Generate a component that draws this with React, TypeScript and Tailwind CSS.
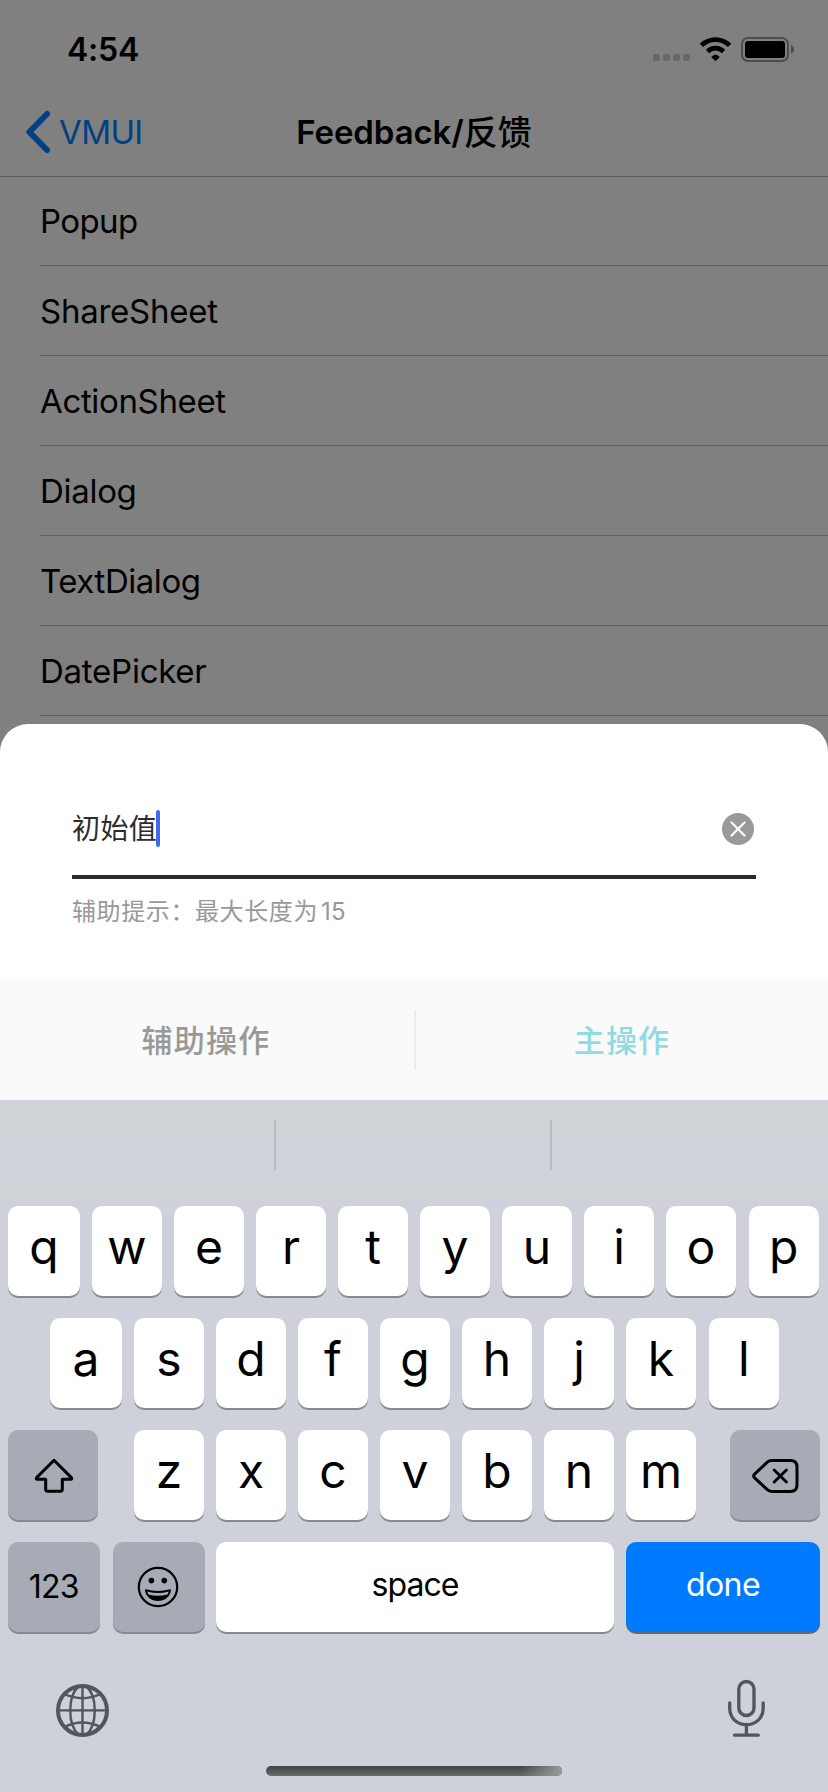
import type { ReactNode } from 'react';

const rows = [
  { label: 'Popup', cls: 'h-[89px] tracking-[-0.6px]' },
  { label: 'ShareSheet', cls: 'h-[90px] tracking-[-0.25px]' },
  { label: 'ActionSheet', cls: 'h-[90px] tracking-[-0.35px]' },
  { label: 'Dialog', cls: 'h-[90px] tracking-[-0.3px]' },
  { label: 'TextDialog', cls: 'h-[90px] tracking-[-0.45px]' },
  { label: 'DatePicker', cls: 'h-[90px] tracking-[-0.25px]' },
];

function StatusIcons() {
  return (
    <svg width="146" height="30" viewBox="651 35 146 30">
      <g fill="#676767">
        <rect x="653" y="54" width="7" height="7" rx="2" />
        <rect x="663" y="54" width="7" height="7" rx="2" />
        <rect x="673" y="54" width="7" height="7" rx="2" />
        <rect x="683" y="54" width="7" height="7" rx="2" />
      </g>
      <g fill="none" stroke="#000" strokeWidth="4.8">
        <path d="M701.4 45.4A20 20 0 0 1 729.6 45.4" />
        <path d="M707.5 51.5A11.3 11.3 0 0 1 723.5 51.5" />
      </g>
      <path d="M711.2 57Q715.5 52 719.8 57L715.5 61.2Z" />
      <rect x="742" y="38" width="46" height="23" rx="6" fill="none" stroke="#4d4d4d" strokeWidth="2" />
      <rect x="745" y="41" width="40" height="17" rx="3" />
      <path d="M791 45.3Q794 46.5 794 49.5T791 53.7Z" fill="#4d4d4d" />
    </svg>
  );
}

function Key({ children, cls = 'w-[70px]' }: { children: ReactNode; cls?: string }) {
  return (
    <div className={`flex h-[90px] shrink-0 items-center justify-center rounded-[10px] bg-white pb-[8px] text-[48px] leading-none font-[375] shadow-[0_2px_0_#898a8d] ${cls}`}>
      {children}
    </div>
  );
}

function GreyKey({ children, cls = 'w-[90px]' }: { children: ReactNode; cls?: string }) {
  return (
    <div className={`flex h-[90px] shrink-0 items-center justify-center rounded-[10px] bg-[#a7abb6] text-[32px] leading-none shadow-[0_2px_0_#898a8d] ${cls}`}>
      {children}
    </div>
  );
}

export default function App() {
  return (
    <div className="flex h-[1792px] w-[828px] flex-col overflow-hidden bg-[#808080] font-['Inter','Noto_Sans_CJK_SC',sans-serif] text-black">
      <header className="flex h-[177px] shrink-0 flex-col border-b border-[#595959]">
        <div className="flex h-[88px] items-start justify-between pt-[35px] pr-[31px] pl-[67px]">
          <span className="text-[32px] leading-[30px] font-semibold tracking-[-0.2px]">4:54</span>
          <StatusIcons />
        </div>
        <div className="grid h-[88px] grid-cols-[1fr_auto_1fr] items-center pl-[24px]">
          <div className="flex items-center text-[#004085]">
            <svg width="28" height="44" viewBox="24 110 28 44" fill="none" stroke="currentColor" strokeWidth="6" strokeLinecap="round" strokeLinejoin="round">
              <path d="M47 114L29.3 132L47 150" />
            </svg>
            <span className="pl-[7px] text-[33px] leading-none tracking-[-0.6px]">VMUI</span>
          </div>
          <div className="flex items-center pr-[24px] leading-none font-semibold">
            <span className="text-[33px] tracking-[-0.1px]">Feedback/</span>
            <span className="pt-[2px] text-[34px] font-medium">反馈</span>
          </div>
        </div>
      </header>

      <ul className="flex h-[546.5px] shrink-0 flex-col pl-[40px] text-[33px] leading-none">
        {rows.map((r) => (
          <li key={r.label} className={`flex shrink-0 items-center border-b border-[#636363] pt-px ${r.cls}`}>
            {r.label}
          </li>
        ))}
      </ul>

      <section className="flex h-[376.5px] shrink-0 flex-col overflow-hidden rounded-t-[28px] bg-white">
        <div className="flex h-[256.5px] shrink-0 flex-col px-[72px] pt-[60px]">
          <div className="flex h-[95.5px] items-center justify-between border-b-4 border-[#2c2c2e] pr-[2px]">
            <div className="flex items-center pb-[2px]">
              <span className="w-[84px] pt-[2px] text-[28px] leading-none tracking-[0.4px] whitespace-nowrap text-[#2c2c2e]">初始值</span>
              <span className="h-[37px] w-[4px] rounded-[2px] bg-[#4169f0]" />
            </div>
            <svg width="32" height="34" viewBox="0 0 32 34">
              <circle cx="16" cy="17" r="16" fill="#999" />
              <path d="M9.5 10.5L22.5 23.5M22.5 10.5L9.5 23.5" stroke="#fff" strokeWidth="2.2" strokeLinecap="round" />
            </svg>
          </div>
          <p className="flex pt-[20px] text-[24px] leading-[26px] tracking-[0.6px] text-[#999]">
            <span>辅助提示：最大长度为</span>
            <span className="pl-[3px] tracking-[0.3px]">15</span>
          </p>
        </div>
        <div className="flex h-[120px] items-center bg-[#fafafa] text-[31px] leading-none font-medium">
          <button className="flex-1 pr-[2px] tracking-[1.2px] text-[#999]">辅助操作</button>
          <span className="h-[60px] w-[2px] bg-[#ececec]" />
          <button className="flex-1 tracking-[1.2px] text-[#90dbe1]">主操作</button>
        </div>
      </section>

      <section className="flex h-[692px] shrink-0 flex-col bg-[#ced1d9]">
        <div className="h-[106px] shrink-0">
          <div className="flex h-[100px] bg-[linear-gradient(to_bottom,#ced2db_2%,#d0d3d7_8%,#d0d3d7_35%,#ced2da_37%,#ced2da_84%,#d0d3d7_88%,#d0d3d7_99%,#ced1d9_100%)] pt-[20px]">
            <div className="h-[50px] w-[276px] border-r-2 border-[#b9bbc0]" />
            <div className="h-[50px] w-[276px] border-r-2 border-[#b9bbc0]" />
          </div>
        </div>
        <div className="flex flex-col gap-[22px]">
          <div className="flex gap-[12px] pl-[8px]">
            <Key cls="w-[72px]">q</Key>
            {['w', 'e', 'r', 't', 'y', 'u', 'i', 'o'].map((k) => (
              <Key key={k}>{k}</Key>
            ))}
            <Key cls="ml-[0.5px] w-[70.5px]">p</Key>
          </div>
          <div className="flex gap-[12px] pl-[50px]">
            <Key cls="w-[72px]">a</Key>
            {['s', 'd', 'f', 'g', 'h', 'j', 'k'].map((k) => (
              <Key key={k}>{k}</Key>
            ))}
            <Key cls="ml-[0.5px] w-[70.5px]">l</Key>
          </div>
          <div className="flex px-[8px]">
            <GreyKey>
              <svg width="42" height="42" viewBox="32 1454 42 42" fill="none" stroke="#000" strokeWidth="3" strokeLinejoin="round">
                <path d="M54 1460.3L36.6 1477.6Q35.6 1479.2 37.4 1479.2H45.7V1489.2Q45.7 1491.2 47.7 1491.2H60.3Q62.3 1491.2 62.3 1489.2V1479.2H70.6Q72.4 1479.2 71.4 1477.6Z" />
              </svg>
            </GreyKey>
            <div className="mr-[34px] ml-[36px] flex gap-[12px]">
              {['z', 'x', 'c', 'v', 'b', 'n', 'm'].map((k) => (
                <Key key={k}>{k}</Key>
              ))}
            </div>
            <GreyKey>
              <svg width="50" height="42" viewBox="750 1454 50 42" fill="none" stroke="#000" strokeWidth="3" strokeLinejoin="round" strokeLinecap="round">
                <path d="M767.3 1462.2Q769.3 1460.5 771.5 1460.5H790.5Q797 1460.5 797 1467V1485Q797 1491.4 790.5 1491.4H771.5Q769.3 1491.4 767.3 1489.7L754.6 1477.8Q752.8 1476 754.6 1474.1Z" />
                <path d="M774.2 1470L786.4 1482M786.4 1470L774.2 1482" />
              </svg>
            </GreyKey>
          </div>
          <div className="flex pl-[8px]">
            <GreyKey cls="w-[91.5px] mr-[13.5px] tracking-[-0.8px]">123</GreyKey>
            <GreyKey cls="w-[91.5px] mr-[11.5px] pr-[1.5px]">
              <svg width="44" height="44" viewBox="136 1565 44 44">
                <circle cx="158" cy="1587" r="19.2" fill="none" stroke="#000" strokeWidth="2.2" />
                <circle cx="151.4" cy="1580.6" r="2.8" />
                <circle cx="164.3" cy="1580.6" r="2.8" />
                <path d="M146 1589.2Q158 1592.6 170 1589.2Q171.2 1589.2 171 1590.6C169.8 1597.5 164.5 1601 158 1601S146.2 1597.5 145 1590.6Q144.8 1589.2 146 1589.2Z" />
                <path d="M147.3 1591.4Q158 1594.4 168.7 1591.4Q168.3 1593.2 167.4 1594.6Q158 1597 148.6 1594.6Q147.7 1593.2 147.3 1591.4Z" fill="#a7abb6" />
              </svg>
            </GreyKey>
            <div className="flex h-[90px] w-[398px] items-center justify-center rounded-[10px] bg-white pb-[5px] text-[32px] leading-none tracking-[-0.9px] shadow-[0_2px_0_#898a8d]">space</div>
            <div className="ml-[12px] flex h-[90px] w-[194px] items-center justify-center rounded-[10px] bg-[#007aff] pb-[5px] text-[32px] leading-none tracking-[-0.6px] text-white shadow-[0_2px_0_#68696d]">done</div>
          </div>
        </div>
        <div className="flex justify-between pt-[44px] pr-[60px] pl-[54px]">
          <svg width="57" height="64" viewBox="54 1676 57 64" fill="none" stroke="#50555e" strokeWidth="2.4">
            <circle cx="82.5" cy="1710.4" r="24.5" strokeWidth="4" />
            <path d="M82.5 1686V1735M58 1710.4H107" />
            <path d="M78.5 1686.5C67.5 1696 67.5 1725 78.5 1734.5M86.5 1686.5C97.5 1696 97.5 1725 86.5 1734.5" />
            <path d="M64.5 1694Q82.5 1702.5 100.5 1694M64.5 1727Q82.5 1718 100.5 1727" />
          </svg>
          <svg width="44" height="64" viewBox="724 1676 44 64" fill="none" stroke="#50555e" strokeWidth="3.3" strokeLinecap="round">
            <rect x="738.8" y="1681.5" width="15.2" height="34" rx="7.6" />
            <path d="M729.7 1702.8V1708C729.7 1718 737 1724.7 746.4 1724.7S763.2 1718 763.2 1708V1702.8M746.4 1725V1735M734.5 1735.2H758.3" />
          </svg>
        </div>
        <div className="mt-[26px] ml-[266px] h-[10px] w-[296px] overflow-hidden rounded-full bg-linear-to-b from-[#3f4343] to-[#69696b]">
          <div className="h-full w-full bg-linear-to-r from-transparent from-86% to-[#98999d]" />
        </div>
      </section>
    </div>
  );
}
